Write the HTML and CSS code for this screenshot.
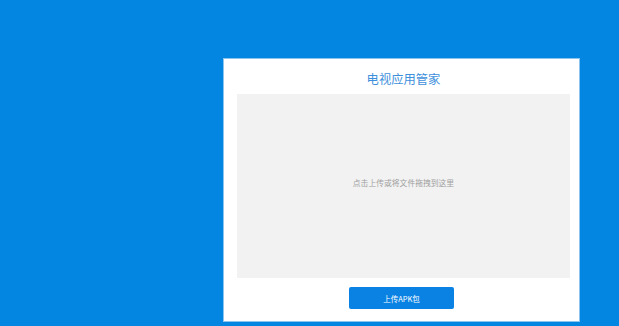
FILE: index.html
```html
<!DOCTYPE html>
<html lang="zh-CN">
<head>
    <meta charset="UTF-8">
    <meta name="viewport" content="width=device-width, initial-scale=1.0">
    <title>电视应用管家</title>
    <link rel="stylesheet" href="styles.css">
</head>
<body>
    <div class="container">
        <h2>电视应用管家</h2>
        <div class="drop-zone">点击上传或将文件拖拽到这里</div>
        <div class="actions">
            <button type="button">上传APK包</button>
        </div>
    </div>
</body>
</html>
```

FILE: styles.css
```css
body {
    font-family: "Noto Sans CJK SC", "Liberation Sans", sans-serif;
    background-color: #0386e2;
    margin: 0;
    height: 326px;
    overflow: hidden;
}

.container {
    background: #ffffff;
    margin: 58px 0 0 223px;
    width: 357px;
    height: 264px;
    box-sizing: border-box;
    padding: 0 9px 0 13px;
    border: 1px solid #8cc4f0;
    display: flex;
    flex-direction: column;
}

h2 {
    color: #3e90dc;
    font-size: 12.3px;
    font-weight: normal;
    text-align: center;
    margin: 0;
    height: 35px;
    line-height: 40px;
}

.drop-zone {
    background: #f2f2f2;
    height: 184px;
    box-sizing: border-box;
    padding-bottom: 7px;
    display: flex;
    justify-content: center;
    align-items: center;
    color: #a0a0a0;
    font-size: 7.8px;
}

.actions {
    display: flex;
    justify-content: center;
    margin-top: 9px;
    padding-right: 4px;
}

button {
    background: #0a82e4;
    color: #ffffff;
    width: 105px;
    height: 22px;
    border: none;
    border-radius: 2px;
    font-family: inherit;
    font-size: 7.5px;
    cursor: pointer;
}
```
